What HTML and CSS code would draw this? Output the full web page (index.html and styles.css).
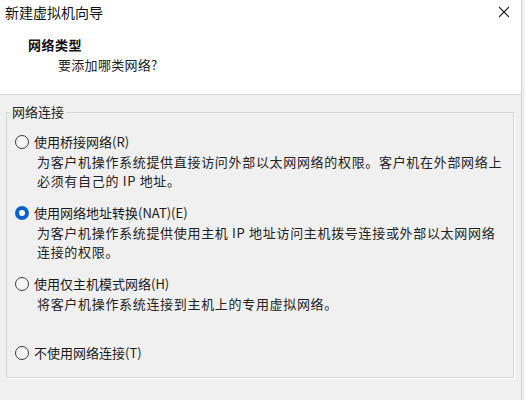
FILE: index.html
```html
<!DOCTYPE html>
<html lang="zh-CN">
<head>
<meta charset="utf-8">
<link rel="stylesheet" href="styles.css">
</head>
<body>
<div class="window">
  <div class="header">
    <div class="titlebar">
      <span class="title">新建虚拟机向导</span>
      <svg class="close" width="12" height="12" viewBox="0 0 12 12"><path d="M1 1 L11 11 M11 1 L1 11" stroke="#222" stroke-width="1.1" fill="none"/></svg>
    </div>
    <div class="heading">网络类型</div>
    <div class="subheading">要添加哪类网络?</div>
  </div>
  <div class="content">
    <fieldset class="group">
      <legend class="legend">网络连接</legend>
      <div class="option first">
        <div class="opt-row"><span class="radio"></span><span class="label">使用桥接网络(R)</span></div>
        <div class="desc"><span class="line">为客户机操作系统提供直接访问外部以太网网络的权限。客户机在外部网络上</span><span class="line">必须有自己的 IP 地址。</span></div>
      </div>
      <div class="option">
        <div class="opt-row"><span class="radio checked"></span><span class="label">使用网络地址转换(NAT)(E)</span></div>
        <div class="desc"><span class="line">为客户机操作系统提供使用主机 IP 地址访问主机拨号连接或外部以太网网络</span><span class="line">连接的权限。</span></div>
      </div>
      <div class="option">
        <div class="opt-row"><span class="radio"></span><span class="label">使用仅主机模式网络(H)</span></div>
        <div class="desc"><span class="line">将客户机操作系统连接到主机上的专用虚拟网络。</span></div>
      </div>
      <div class="option last">
        <div class="opt-row"><span class="radio"></span><span class="label">不使用网络连接(T)</span></div>
      </div>
    </fieldset>
  </div>
</div>
</body>
</html>
```

FILE: styles.css
```css
html, body {
  margin: 0;
  padding: 0;
}
body {
  width: 525px;
  height: 400px;
  background: #f0f0f0;
  font-family: "Noto Sans CJK SC", "Noto Sans", sans-serif;
  color: #1a1a1a;
  overflow: hidden;
}
.window {
  width: 521px;
  height: 400px;
  border-right: 1px solid #d2d2d2;
  background: #f0f0f0;
}
.header {
  height: 95px;
  background: #ffffff;
  border-bottom: 1px solid #d9d9d9;
  box-sizing: border-box;
}
.titlebar {
  display: flex;
  align-items: center;
  justify-content: space-between;
  height: 24px;
  padding: 0 11px 0 5px;
}
.title {
  font-size: 14px;
  line-height: 24px;
  color: #111;
}
.close {
  display: block;
  margin-top: -1px;
}
.heading {
  margin: 11px 0 0 28px;
  font-size: 13px;
  font-weight: bold;
  line-height: 20px;
  color: #111;
  letter-spacing: 0.5px;
}
.subheading {
  margin-left: 58px;
  font-size: 13px;
  line-height: 20px;
  color: #222;
  letter-spacing: 0.3px;
}
.content {
  padding: 7px 0 0 6px;
}
.group {
  width: 508px;
  height: 276px;
  box-sizing: border-box;
  margin: 0;
  padding: 0 0 0 8px;
  border: 1px solid #d8d8d8;
  box-shadow: 1px 1px 0 #ffffff;
  min-width: 0;
}
.legend {
  margin-left: -5px;
  padding: 0 2px;
  font-size: 13px;
  line-height: 20px;
  color: #222;
}
.option {
  margin-top: 13px;
}
.option.first {
  margin-top: 10px;
}
.option.last {
  margin-top: 30px;
}
.opt-row {
  display: flex;
  align-items: center;
  height: 20px;
  gap: 5px;
}
.radio {
  width: 14px;
  height: 14px;
  box-sizing: border-box;
  border-radius: 50%;
  border: 1px solid #3c3c3c;
  background: #f6f6f6;
  flex: none;
}
.radio.checked {
  border: 4.5px solid #0a64c8;
  background: #ffffff;
}
.label {
  font-size: 13px;
  line-height: 20px;
  color: #1a1a1a;
}
.desc {
  margin-left: 22px;
  font-size: 13px;
  line-height: 19px;
  letter-spacing: 0.68px;
  color: #222;
}
.line {
  display: block;
  white-space: nowrap;
}
```
